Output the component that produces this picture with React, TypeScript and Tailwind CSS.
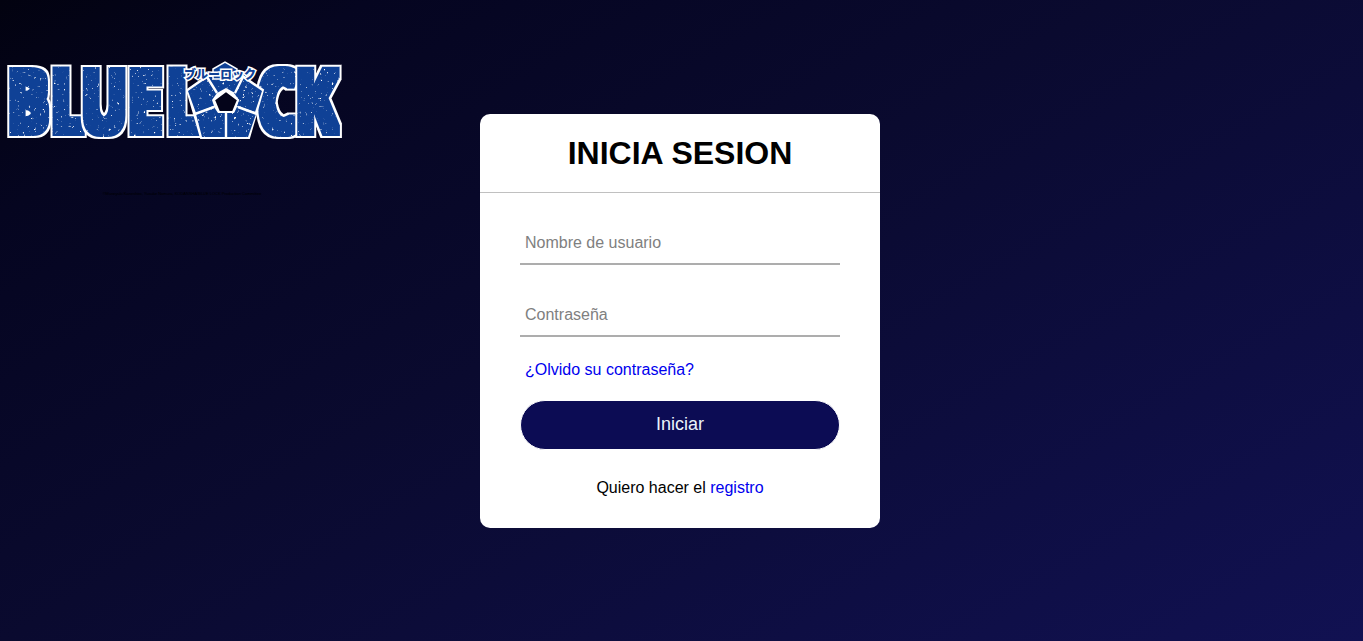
import type { FormEvent } from "react";

const BLUE = "#0f4196";

type Letter = { char: string; x: number };

const letters: Letter[] = [
  { char: "B", x: 28 },
  { char: "L", x: 67 },
  { char: "U", x: 104 },
  { char: "E", x: 145 },
  { char: "L", x: 183 },
  { char: "C", x: 277 },
  { char: "K", x: 316 },
];

const panels = [
  "188,91 207,78 217,93 212,100 214,106 196,113",
  "208,77 242,77 235,93 226,88 217,93",
  "243,78 262,91 255,112 237,106 239,100 234,93",
  "196,114 214,107 218,113 225,113 225,137 202,137",
  "256,114 237,107 234,113 227,113 227,137 248,137",
];

function Logo() {
  return (
    <svg viewBox="0 0 364 200" className="block w-[364px] max-w-full" role="img" aria-label="Blue Lock">
      <defs>
        {/* Thickens a letter, prints it in worn blue and rims it in white. */}
        <filter
          id="block"
          x="0"
          y="50"
          width="364"
          height="100"
          filterUnits="userSpaceOnUse"
          colorInterpolationFilters="sRGB"
        >
          <feMorphology in="SourceAlpha" operator="dilate" radius="3 5" result="body" />
          <feMorphology in="body" operator="dilate" radius="2" result="rim" />
          <feFlood floodColor="#fff" />
          <feComposite in2="rim" operator="in" result="white" />
          <feFlood floodColor={BLUE} />
          <feComposite in2="body" operator="in" result="blue" />
          <feTurbulence type="fractalNoise" baseFrequency="0.35" numOctaves="3" seed="4" />
          <feColorMatrix values="0 0 0 0 1  0 0 0 0 1  0 0 0 0 1  6 0 0 0 -4.1" />
          <feComposite in2="body" operator="in" result="wear" />
          <feMerge>
            <feMergeNode in="white" />
            <feMergeNode in="blue" />
            <feMergeNode in="wear" />
          </feMerge>
        </filter>
        <filter
          id="worn"
          x="180"
          y="60"
          width="90"
          height="80"
          filterUnits="userSpaceOnUse"
          colorInterpolationFilters="sRGB"
        >
          <feTurbulence type="fractalNoise" baseFrequency="0.35" numOctaves="3" seed="9" />
          <feColorMatrix values="0 0 0 0 1  0 0 0 0 1  0 0 0 0 1  6 0 0 0 -4" />
          <feComposite in2="SourceAlpha" operator="in" result="wear" />
          <feMerge>
            <feMergeNode in="SourceGraphic" />
            <feMergeNode in="wear" />
          </feMerge>
        </filter>
      </defs>
      <g
        fontFamily='"Open Sans Condensed", "Roboto Condensed", sans-serif'
        fontWeight="800"
        fontSize="83"
        textAnchor="middle"
      >
        {letters.map((l) => (
          <text key={l.x} x={l.x} y="131" filter="url(#block)">
            {l.char}
          </text>
        ))}
      </g>
      <path d="M187 90 L207 76 H243 L263 90 L249 138 H201 Z" fill="#fff" stroke="#fff" strokeWidth="2" />
      <g fill={BLUE} filter="url(#worn)">
        {panels.map((points) => (
          <polygon key={points} points={points} />
        ))}
      </g>
      <path
        d="M207 77 L217 93 M243 77 L235 93 M195 114 L214 107 M257 114 L238 107 M226 113 V138"
        fill="none"
        stroke="#fff"
        strokeWidth="2.4"
      />
      <polygon points="226,91 238,100 233,112 219,112 214,100" fill="#04041a" stroke="#fff" strokeWidth="2" />
      <path d="M213 69 L225 62 L237 69 V79 H213 Z" fill={BLUE} stroke="#fff" strokeWidth="1.5" />
      <text
        x="220"
        y="79"
        textAnchor="middle"
        fontFamily='"Noto Sans CJK JP", sans-serif'
        fontWeight="900"
        fontSize="12"
        fill={BLUE}
        stroke="#fff"
        strokeWidth="3"
        paintOrder="stroke"
      >
        ブルーロック
      </text>
      <text
        x="182"
        y="195"
        textAnchor="middle"
        fontFamily='"Liberation Sans", sans-serif'
        fontSize="4"
        fill="#000"
      >
        ©Muneyuki Kaneshiro, Yusuke Nomura, KODANSHA/BLUE LOCK Production Committee
      </text>
    </svg>
  );
}

type FieldProps = { id: string; label: string; type: string };

function Field({ id, label, type }: FieldProps) {
  return (
    <div className="relative mb-[30px] border-b-2 border-[#adadad]">
      <input
        id={id}
        name={id}
        type={type}
        placeholder=" "
        className="peer block h-10 w-full bg-transparent px-[5px] text-base outline-none"
      />
      <label
        htmlFor={id}
        className="pointer-events-none absolute inset-0 flex items-center px-[5px] text-[#808080] not-peer-placeholder-shown:-top-10 not-peer-placeholder-shown:text-xs"
      >
        {label}
      </label>
    </div>
  );
}

export default function App() {
  const onSubmit = (event: FormEvent) => event.preventDefault();

  return (
    <div className="grid min-h-screen grid-cols-[1fr_400px_1fr] bg-[linear-gradient(150deg,#020210,#050520_15%,#0a0a2f_45%,#111152)] pr-[3px] font-['Liberation_Sans',Arial,sans-serif] text-base text-black">
      <header>
        <Logo />
      </header>
      <main className="self-center rounded-[10px] bg-white">
        <h1 className="border-b border-[#c0c0c0] py-5 text-center text-[32px] leading-[38px] font-bold">
          INICIA SESION
        </h1>
        <form onSubmit={onSubmit} className="px-10 pt-[30px] pb-[30px]">
          <Field id="usuario" label="Nombre de usuario" type="text" />
          <Field id="clave" label="Contraseña" type="password" />
          <a href="#recuperar" className="-mt-[7px] mb-5 block px-[5px] leading-5 text-[#0000ee]">
            ¿Olvido su contraseña?
          </a>
          <button
            type="submit"
            className="block h-[50px] w-full rounded-full border border-white bg-[#0c0c54] pb-0.5 text-lg text-[#e9f4fb]"
          >
            Iniciar
          </button>
          <p className="mt-7 text-center leading-5">
            Quiero hacer el{" "}
            <a href="#registro" className="text-[#0000ee]">
              registro
            </a>
          </p>
        </form>
      </main>
    </div>
  );
}
